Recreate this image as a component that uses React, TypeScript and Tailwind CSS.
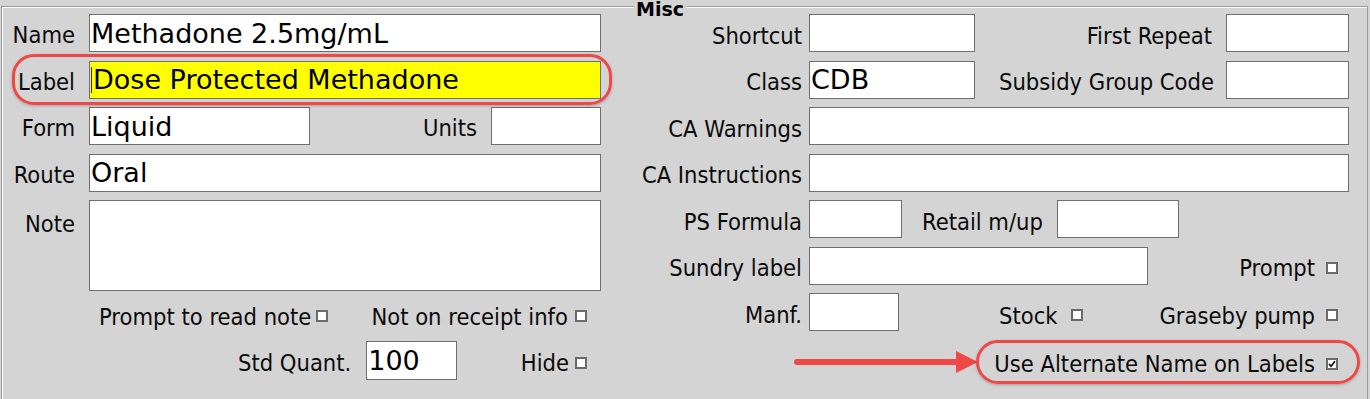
const lbl = "font-['DejaVu_Sans_Condensed','DejaVu_Sans',sans-serif] text-[23.5px] text-[#0a0a0a] leading-none whitespace-nowrap";
const val = "font-['DejaVu_Sans',sans-serif] text-[27px] text-black leading-none whitespace-nowrap";

function Field({ className = "", value }: { className?: string; value?: string }) {
  return (
    <div className={`h-[38px] shrink-0 border border-[#6e6e6e] bg-white flex items-center pl-[1px] overflow-hidden ${className}`}>
      {value && <span className={val}>{value}</span>}
    </div>
  );
}

function Check({ checked = false }: { checked?: boolean }) {
  return (
    <span className="w-[12px] h-[12px] shrink-0 border-2 border-[#6a6a6a] bg-white flex items-center justify-center">
      {checked && (
        <svg width="8" height="8" viewBox="0 0 8 8">
          <path d="M1 4 L3 6.2 L7 1.2" stroke="#000" strokeWidth="1.6" fill="none" />
        </svg>
      )}
    </span>
  );
}

function Ring({ className }: { className: string }) {
  return (
    <span
      className={`absolute pointer-events-none border-[3px] border-[#f04747] shadow-[0_1px_3px_rgba(0,0,0,0.25)] ${className}`}
    />
  );
}

export default function App() {
  return (
    <div className="w-[1370px] h-[399px] bg-[#d4d4d4] overflow-hidden relative pt-[6px] pl-[1px] pr-[2px]">
      {/* group frame */}
      <div className="h-[420px] border border-[#9c9c9c] shadow-[inset_1px_1px_0_#ffffff] relative pt-[7px] flex">
        <span className="absolute left-[632px] top-[-6px] px-[2px] bg-[#d4d4d4] font-['DejaVu_Sans',sans-serif] font-bold text-[19px] leading-[17px] text-black">
          Misc
        </span>

        {/* left column */}
        <div className="w-[610px] shrink-0 flex flex-col gap-[8.5px]">
          <div className="flex items-center h-[38px]">
            <span className={`${lbl} w-[73px] text-right pt-[6px]`}>Name</span>
            <Field className="ml-[14px] w-[512px]" value="Methadone 2.5mg/mL" />
          </div>
          <div className="flex items-center h-[38px] relative">
            <Ring className="left-[10px] right-0 top-[-7px] bottom-[-6px] rounded-[22px]" />
            <span className={`${lbl} w-[73px] text-right pt-[6px]`}>Label</span>
            <div className="ml-[14px] w-[512px] h-[38px] border border-[#6e6e6e] bg-[#ffff00] flex items-center pl-[1px]">
              <span className="w-[1px] h-[26px] bg-[#2020c0] mr-[1px]" />
              <span className={val}>Dose Protected Methadone</span>
            </div>
          </div>
          <div className="flex items-center h-[38px]">
            <span className={`${lbl} w-[73px] text-right pt-[6px]`}>Form</span>
            <Field className="ml-[14px] w-[221px]" value="Liquid" />
            <span className={`${lbl} ml-auto pt-[6px]`}>Units</span>
            <Field className="ml-[14px] mr-[11px] w-[110px]" />
          </div>
          <div className="flex items-center h-[38px]">
            <span className={`${lbl} w-[73px] text-right pt-[6px]`}>Route</span>
            <Field className="ml-[14px] w-[512px]" value="Oral" />
          </div>
          <div className="flex items-start h-[91px]">
            <span className={`${lbl} w-[73px] text-right pt-[13px]`}>Note</span>
            <div className="ml-[14px] w-[512px] h-[91px] border border-[#6e6e6e] bg-white" />
          </div>
          <div className="flex items-center h-[33px] pl-[97px] pr-[25px]">
            <span className={`${lbl} pt-[4px]`}>Prompt to read note</span>
            <span className="ml-[5px]"><Check /></span>
            <span className={`${lbl} ml-auto pt-[4px]`}>Not on receipt info</span>
            <span className="ml-[7px]"><Check /></span>
          </div>
          <div className="flex items-center h-[39px] pl-[236px] pr-[25px]">
            <span className={`${lbl} pt-[7px]`}>Std Quant.</span>
            <Field className="ml-[15px] w-[91px] h-[39px]" value="100" />
            <span className={`${lbl} ml-auto pt-[7px]`}>Hide</span>
            <span className="ml-[6px] mt-[4px]"><Check /></span>
          </div>
        </div>

        {/* right column: Misc */}
        <div className="w-[737px] shrink-0 flex flex-col gap-[8.5px]">
          <div className="flex items-center h-[38px]">
            <span className={`${lbl} w-[190px] text-right pt-[7px]`}>Shortcut</span>
            <Field className="ml-[7px] w-[166px]" />
            <span className={`${lbl} ml-auto pt-[7px]`}>First Repeat</span>
            <Field className="ml-[14px] w-[123px]" />
          </div>
          <div className="flex items-center h-[38px]">
            <span className={`${lbl} w-[190px] text-right pt-[7px]`}>Class</span>
            <Field className="ml-[7px] w-[166px]" value="CDB" />
            <span className={`${lbl} ml-auto pt-[7px]`}>Subsidy Group Code</span>
            <Field className="ml-[12px] w-[123px]" />
          </div>
          <div className="flex items-center h-[38px]">
            <span className={`${lbl} w-[190px] text-right pt-[7px]`}>CA Warnings</span>
            <Field className="ml-[7px] w-[540px]" />
          </div>
          <div className="flex items-center h-[38px]">
            <span className={`${lbl} w-[190px] text-right pt-[7px]`}>CA Instructions</span>
            <Field className="ml-[7px] w-[540px]" />
          </div>
          <div className="flex items-center h-[38px]">
            <span className={`${lbl} w-[190px] text-right pt-[7px]`}>PS Formula</span>
            <Field className="ml-[7px] w-[93px]" />
            <span className={`${lbl} ml-[20px] pt-[7px]`}>Retail m/up</span>
            <Field className="ml-[14px] w-[122px]" />
          </div>
          <div className="flex items-center h-[38px]">
            <span className={`${lbl} w-[190px] text-right pt-[7px]`}>Sundry label</span>
            <Field className="ml-[7px] w-[339px]" />
            <span className={`${lbl} ml-auto pt-[7px]`}>Prompt</span>
            <span className="ml-[11px] mr-[11px] mt-[4px]"><Check /></span>
          </div>
          <div className="flex items-center h-[38px]">
            <span className={`${lbl} w-[190px] text-right pt-[7px]`}>Manf.</span>
            <Field className="ml-[7px] w-[90px]" />
            <span className={`${lbl} ml-[100px] pt-[9px]`}>Stock</span>
            <span className="ml-[13px] mt-[5px]"><Check /></span>
            <span className={`${lbl} ml-auto pt-[9px]`}>Graseby pump</span>
            <span className="ml-[11px] mr-[11px] mt-[5px]"><Check /></span>
          </div>
          <div className="flex items-center h-[44px] pt-[1px]">
            <svg className="ml-[181px] shrink-0" width="185" height="28" viewBox="0 0 185 28">
              <line x1="4" y1="14" x2="166" y2="14" stroke="#f04747" strokeWidth="6" strokeLinecap="round" />
              <path d="M163 3 L185 14 L163 25 Z" fill="#f04747" />
            </svg>
            <div className="relative ml-auto mr-[11px] flex items-center h-[44px]">
              <Ring className="left-[-18px] right-[-22px] top-0 bottom-0 rounded-[22px]" />
              <span className={`${lbl} pt-[5px]`}>Use Alternate Name on Labels</span>
              <span className="ml-[11px] mt-[3px]"><Check checked /></span>
            </div>
          </div>
        </div>
      </div>
    </div>
  );
}
